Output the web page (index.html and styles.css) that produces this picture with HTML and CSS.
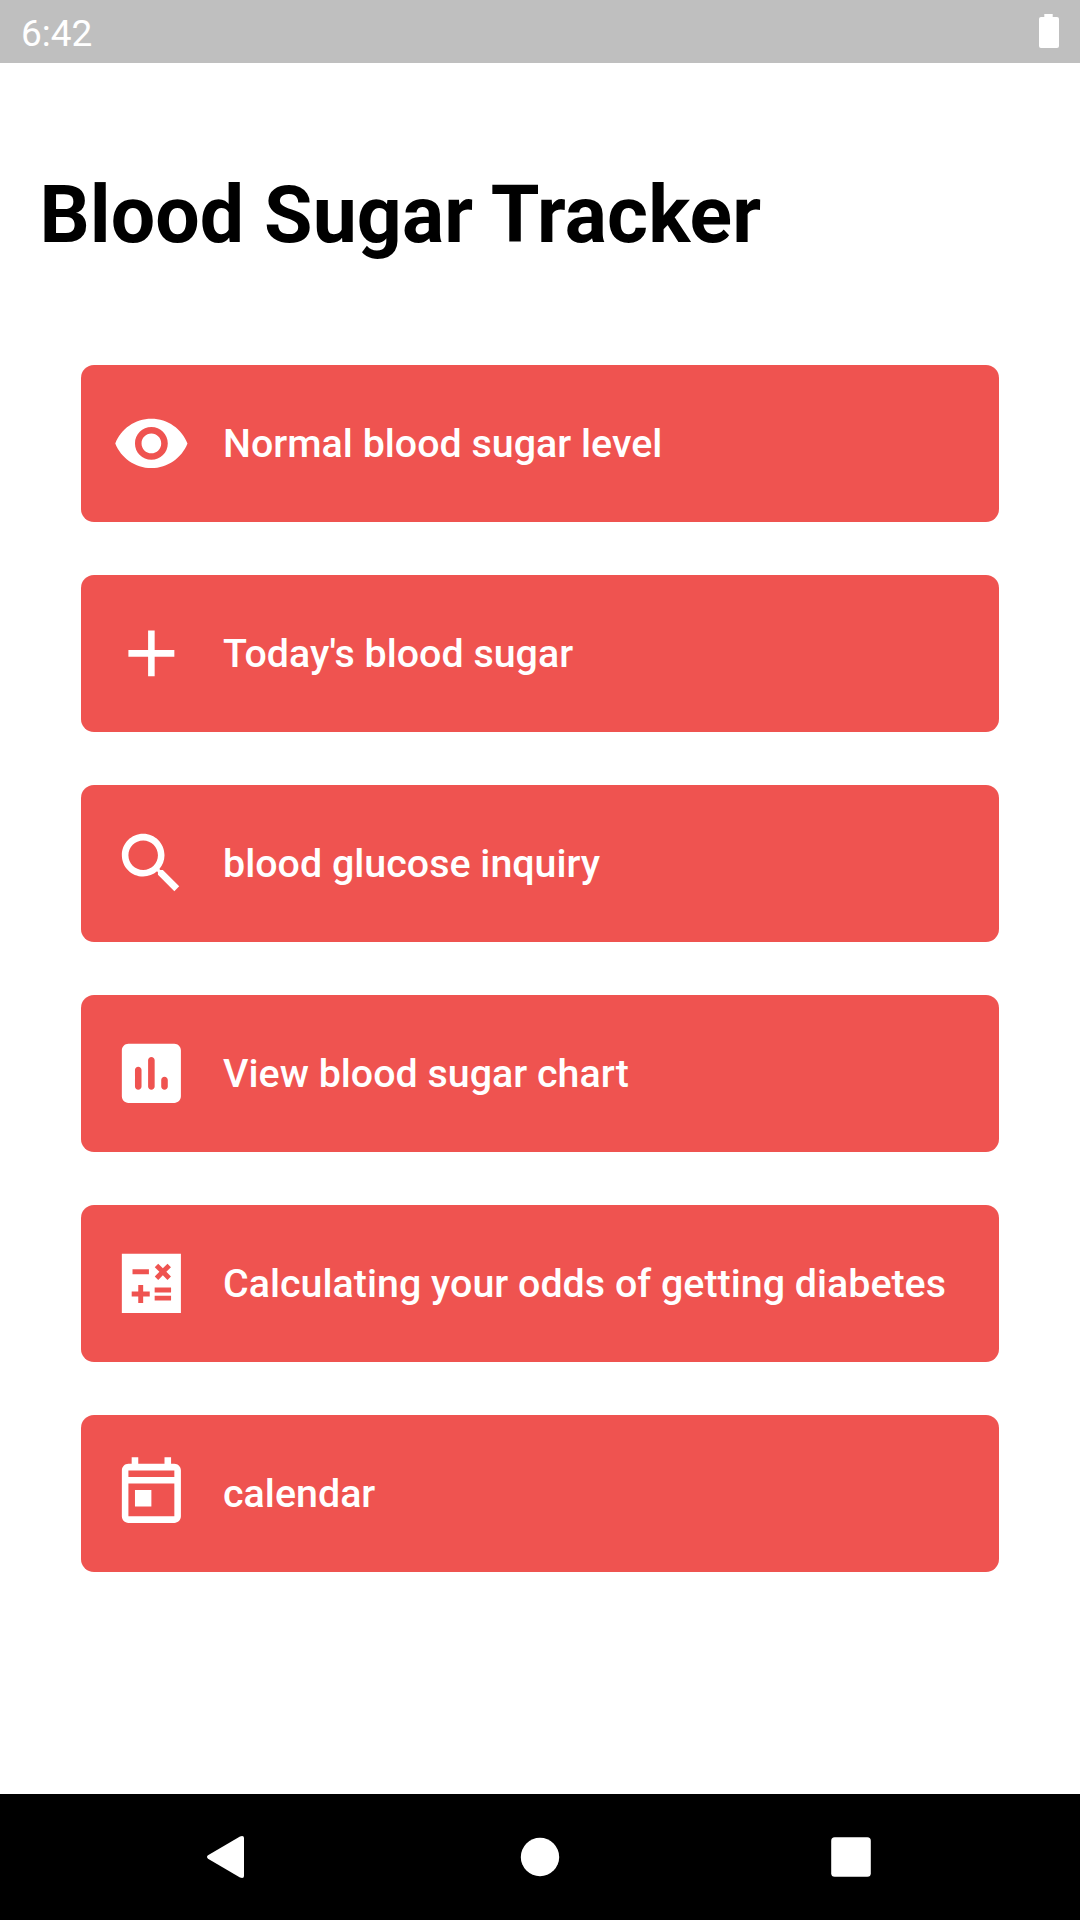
FILE: index.html
```
<!DOCTYPE html>
<html lang="en">
<head>
  <meta charset="UTF-8">
  <title>Blood Sugar Tracker</title>
  <link rel="stylesheet" href="styles.css">
</head>
<body>
  <header class="status-bar">
    <span class="time">6:42</span>
    <svg class="battery" viewBox="0 0 20 34"><path d="M5.3 0h8.4v3H18a2 2 0 0 1 2 2v27a2 2 0 0 1-2 2H2a2 2 0 0 1-2-2V5a2 2 0 0 1 2-2h3.300z"/></svg>
  </header>
  <main>
    <h1>Blood Sugar Tracker</h1>
    <div class="menu">
      <button class="menu-button">
        <svg class="icon" viewBox="0 0 24 24"><path d="M12 4.500C7 4.500 2.730 7.610 1 12c1.730 4.390 6 7.500 11 7.500s9.270-3.110 11-7.500c-1.730-4.390-6-7.500-11-7.500zM12 17c-2.760 0-5-2.240-5-5s2.240-5 5-5 5 2.240 5 5-2.240 5-5 5zm0-8c-1.660 0-3 1.340-3 3s1.340 3 3 3 3-1.340 3-3-1.340-3-3-3z"/></svg>
        <span>Normal blood sugar level</span>
      </button>
      <button class="menu-button">
        <svg class="icon" viewBox="0 0 24 24"><path d="M19 13h-6v6h-2v-6H5v-2h6V5h2v6h6v2z"/></svg>
        <span>Today's blood sugar</span>
      </button>
      <button class="menu-button">
        <svg class="icon" viewBox="0 0 24 24"><path d="M15.500 14h-.79l-.28-.27C15.410 12.590 16 11.110 16 9.500 16 5.910 13.090 3 9.500 3S3 5.910 3 9.500 5.910 16 9.500 16c1.610 0 3.090-.59 4.230-1.570l.27.28v.79l5 4.990L20.490 19l-4.990-5zm-6 0C7.010 14 5 11.990 5 9.500S7.010 5 9.500 5 14 7.010 14 9.500 11.990 14 9.500 14z"/></svg>
        <span>blood glucose inquiry</span>
      </button>
      <button class="menu-button">
        <svg class="icon" viewBox="0 0 24 24"><path d="M19 3H5c-1.100 0-2 .9-2 2v14c0 1.100.9 2 2 2h14c1.100 0 2-.9 2-2V5c0-1.100-.9-2-2-2zM8 17c-.55 0-1-.45-1-1v-5c0-.55.45-1 1-1s1 .45 1 1v5c0 .55-.45 1-1 1zm4 0c-.55 0-1-.45-1-1V8c0-.55.45-1 1-1s1 .45 1 1v8c0 .55-.45 1-1 1zm4 0c-.55 0-1-.45-1-1v-2c0-.55.45-1 1-1s1 .45 1 1v2c0 .55-.45 1-1 1z"/></svg>
        <span>View blood sugar chart</span>
      </button>
      <button class="menu-button">
        <svg class="icon" viewBox="0 0 24 24"><path fill-rule="evenodd" d="M3 3h18v18H3zM6.250 7.720h5v1.500h-5zM13.030 7.060l1.060-1.060 1.410 1.410L16.910 6l1.060 1.060-1.410 1.410 1.410 1.420-1.060 1.060-1.410-1.410-1.410 1.410-1.060-1.060 1.410-1.420zM8 12.500h1.500v2h2V16h-2v2H8v-2H6v-1.500h2zM13 13.250h5v1.500h-5zM13 15.750h5v1.500h-5z"/></svg>
        <span>Calculating your odds of getting diabetes</span>
      </button>
      <button class="menu-button">
        <svg class="icon" viewBox="0 0 24 24"><path d="M19 3h-1V1h-2v2H8V1H6v2H5c-1.110 0-1.990.9-1.990 2L3 19c0 1.100.89 2 2 2h14c1.100 0 2-.9 2-2V5c0-1.100-.9-2-2-2zm0 16H5V9h14v10zm0-12H5V5h14v2zM7 11h5v5H7z"/></svg>
        <span>calendar</span>
      </button>
    </div>
  </main>
  <nav class="nav-bar">
    <svg class="nav-icon" viewBox="0 0 42 42"><path d="M0 19.300 32 .4Q36-1 36 2v38Q36 43 32 41.600L0 22.700Q-2 21 0 19.300z"/></svg>
    <svg class="nav-icon" viewBox="0 0 42 42"><circle cx="21" cy="21" r="19.200"/></svg>
    <svg class="nav-icon" viewBox="0 0 42 42"><rect x="1.200" y="1.200" width="39.600" height="39.600" rx="3.500"/></svg>
  </nav>
</body>
</html>
```

FILE: styles.css
```
body {
  display: flex;
  flex-direction: column;
  height: 1920px;
  margin: 0;
  background-color: #fff;
  font-family: Roboto, sans-serif;
}
.status-bar {
  display: flex;
  justify-content: space-between;
  height: 63px;
  box-sizing: border-box;
  padding: 14px 21px 0;
  background-color: #bfbfbf;
  color: #fff;
}
.time {
  font-size: 37px;
  line-height: 40px;
}
.battery {
  width: 20px;
  height: 34px;
  fill: #fff;
}
main {
  flex: 1;
}
h1 {
  margin: 106px 39.4px 0;
  font-size: 78.75px;
  line-height: 92px;
  font-weight: 700;
  letter-spacing: 0.12px;
  color: #000;
}
.menu {
  display: flex;
  flex-direction: column;
  gap: 52.5px;
  margin: 103.9px 81px 0;
}
.menu-button {
  display: flex;
  align-items: center;
  gap: 32px;
  height: 157.5px;
  padding: 0 31.3px;
  border: none;
  border-radius: 13px;
  background-color: #ef5350;
  color: #fff;
  font-family: inherit;
  font-size: 39.375px;
  font-weight: 500;
  letter-spacing: 0.02px;
  white-space: nowrap;
}
.icon {
  width: 78.75px;
  height: 78.75px;
  flex-shrink: 0;
  fill: currentColor;
}
.nav-bar {
  display: flex;
  justify-content: space-between;
  align-items: center;
  height: 126px;
  padding: 0 208px;
  background-color: #000;
}
.nav-icon {
  width: 42px;
  height: 42px;
  fill: #fff;
  overflow: visible;
}
```
